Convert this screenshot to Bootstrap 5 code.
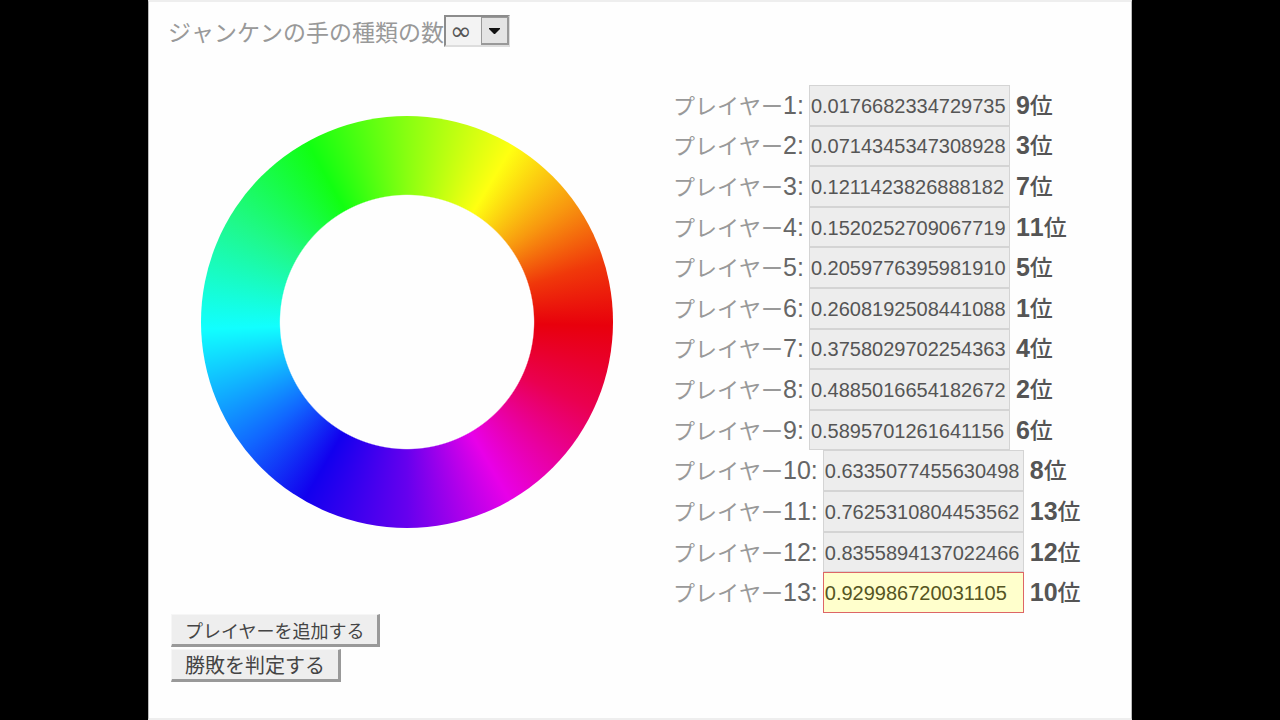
<!DOCTYPE html>
<html lang="ja">
<head>
<meta charset="utf-8">
<meta name="viewport" content="width=device-width, initial-scale=1">
<title>ジャンケン</title>
<link rel="stylesheet" href="https://cdn.jsdelivr.net/npm/bootstrap@5.3.0/dist/css/bootstrap.min.css">
<style>
body { background: #000; font-family: "Liberation Sans", "Noto Sans CJK JP", sans-serif; font-size: 25px; line-height: 32px; color: #666; font-kerning: none; }
.stage { margin: 0 148px; min-height: 100vh; background: #fefefe; border: 1px solid #bbb; border-top: 2px solid #eee; border-bottom: 2px solid #eee; padding: 13px 19px 0; }
.jp { font-family: "Noto Sans CJK JP", sans-serif; color: #999; }
.caption-text { font-size: 23px; }
.kind { position: relative; }
.kind select { appearance: none; width: 66px; height: 32px; border: 2px solid #ddd; border-top-color: #8c8c8c; border-left-color: #8c8c8c; border-radius: 0; background: #f3f3f3; color: #555; font-family: "DejaVu Sans", sans-serif; font-size: 26px; line-height: 28px; padding: 0 0 0 4px; }
.drop { position: absolute; right: 1px; top: 2px; width: 28px; height: 28px; background: #e4e4e4; border: 1px solid #999; border-right-width: 2px; border-bottom-width: 2px; pointer-events: none; }
.play-area { margin-top: 38px; min-height: 528px; }
.wheel { width: 412px; margin: 31px 60px 0 33px; }
.ring { aspect-ratio: 1; border-radius: 50%;
  background: radial-gradient(circle closest-side, #fefefe 61.4%, transparent 62%), conic-gradient(#8f1 0deg, #ff1 31deg, #f8980f 54deg, #f0380a 73deg, #e8000c 91deg, #ea0050 115deg, #e800e8 150deg, #60e 180deg, #1200ee 210deg, #16f 232deg, #1ff 268deg, #1ff98a 300deg, #1f1 331deg, #8f1 360deg); }
.player-name { font-size: 22px; }
.player-label, .rank-text { padding-bottom: 2px; }
.num { width: 201px; border: 1px solid #d4d4d4; border-radius: 0; background: #ededed; color: #555; font-size: 20px; padding: 1px 1px 0; margin: 0 6px 0 5px; }
.num.active { background: #ffc; border-color: #d66; color: #552; }
.rank-text { color: #555; }
.rank-unit { color: #555; font-size: 23px; font-weight: 500; }
.actions { margin: 1px 0 0 3px; gap: 2px; }
.push { height: 33px; border: 1px solid #f6f6f6; border-right: 3px solid #999; border-bottom: 3px solid #999; background: #eee; color: #444; font-family: "Noto Sans CJK JP", sans-serif; line-height: 28px; padding: 0 13px; }
.push-add { font-size: 18px; }
.push-judge { font-size: 20px; }
</style>
</head>
<body>
<main class="stage">
  <div class="d-flex align-items-center">
    <label class="jp caption-text" for="kinds">ジャンケンの手の種類の数</label>
    <div class="kind d-flex">
      <select id="kinds"><option>∞</option></select>
      <span class="drop d-flex align-items-center justify-content-center"><svg width="13" height="8" viewBox="0 0 13 8" fill="#111"><path d="M1 1h11v1l-5 5h-1l-5-5z"/></svg></span>
    </div>
  </div>
  <div class="play-area d-flex">
    <div class="wheel flex-shrink-0"><div class="ring"></div></div>
    <div class="d-flex flex-column flex-grow-1" id="players"></div>
  </div>
  <div class="actions d-flex flex-column align-items-start">
    <button type="button" class="push push-add">プレイヤーを追加する</button>
    <button type="button" class="push push-judge">勝敗を判定する</button>
  </div>
</main>
<script src="https://cdn.jsdelivr.net/npm/bootstrap@5.3.0/dist/js/bootstrap.bundle.min.js"></script>
<script>
const players = [
  ["0.0176682334729735", 9], ["0.0714345347308928", 3], ["0.1211423826888182", 7],
  ["0.1520252709067719", 11], ["0.2059776395981910", 5], ["0.2608192508441088", 1],
  ["0.3758029702254363", 4], ["0.4885016654182672", 2], ["0.5895701261641156", 6],
  ["0.6335077455630498", 8], ["0.7625310804453562", 13], ["0.8355894137022466", 12],
  ["0.929986720031105", 10]
];
document.getElementById("players").innerHTML = players.map(([value, rank], i) => `
  <div class="d-flex flex-fill align-items-stretch text-nowrap">
    <label class="player-label align-self-center" for="p${i}"><span class="jp player-name">プレイヤー</span>${i + 1}:</label>
    <input class="num" type="text" id="p${i}" value="${value}">
    <strong class="rank-text align-self-center">${rank}<span class="jp rank-unit">位</span></strong>
  </div>`).join("");
document.getElementById("p" + (players.length - 1)).classList.add("active");
</script>
</body>
</html>
